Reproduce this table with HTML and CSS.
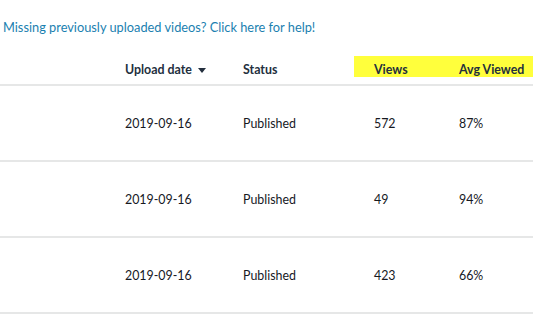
FILE: index.html
```html
<!DOCTYPE html>
<html>
<head>
<meta charset="utf-8">
<link rel="stylesheet" href="styles.css">
</head>
<body>
<div class="page">
  <a class="help" href="#">Missing previously uploaded videos? Click here for help!</a>
  <div class="table">
    <div class="row head">
      <div class="cell"></div>
      <div class="cell">Upload date <span class="caret"></span></div>
      <div class="cell">Status</div>
      <div class="hl">
        <div class="cell num">Views</div>
        <div class="cell pct">Avg Viewed</div>
      </div>
    </div>
    <div class="row">
      <div class="cell"></div>
      <div class="cell">2019-09-16</div>
      <div class="cell">Published</div>
      <div class="cell num">572</div>
      <div class="cell pct">87%</div>
    </div>
    <div class="row">
      <div class="cell"></div>
      <div class="cell">2019-09-16</div>
      <div class="cell">Published</div>
      <div class="cell num">49</div>
      <div class="cell pct">94%</div>
    </div>
    <div class="row">
      <div class="cell"></div>
      <div class="cell">2019-09-16</div>
      <div class="cell">Published</div>
      <div class="cell num">423</div>
      <div class="cell pct">66%</div>
    </div>
  </div>
</div>
</body>
</html>
```

FILE: styles.css
```css
html, body {
  margin: 0;
  padding: 0;
  background: #ffffff;
}
body {
  font-family: Lato, "Open Sans", sans-serif;
  font-size: 12.4px;
  color: #16191f;
  width: 533px;
  overflow: hidden;
}
.page {
  padding-top: 19px;
}
.help {
  display: block;
  padding-left: 3px;
  color: #1b7fb0;
  text-decoration: none;
  font-size: 12.8px;
  line-height: 16px;
}
.table {
  margin-top: 13px;
}
.row {
  display: grid;
  grid-template-columns: 125px 118px 111px 85px 94px;
  align-items: center;
  height: 74px;
  border-bottom: 2px solid #e6e7e7;
}
.row.head {
  height: 36px;
  align-items: start;
  font-weight: bold;
  color: #232f3e;
}
.hl {
  grid-column: 4 / 6;
  display: grid;
  grid-template-columns: 85px 94px;
  background: #ffff3c;
  height: 21px;
  margin-top: 8px;
}
.head .cell {
  line-height: 21px;
  padding-top: 3px;
}
.head > .cell {
  margin-top: 8px;
}
.num, .pct {
  padding-left: 20px;
}
.caret {
  display: inline-block;
  width: 0;
  height: 0;
  border-left: 4px solid transparent;
  border-right: 4px solid transparent;
  border-top: 5px solid #232f3e;
  margin-left: 3px;
  vertical-align: 1px;
}
```
